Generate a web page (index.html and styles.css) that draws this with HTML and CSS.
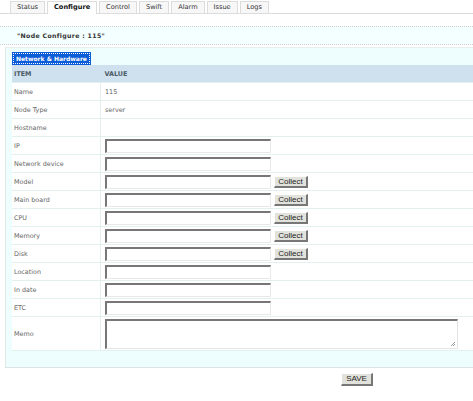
FILE: index.html
```html
<!DOCTYPE html>
<html>
<head>
<meta charset="utf-8">
<link rel="stylesheet" href="styles.css">
</head>
<body>
<div class="tabs">
  <span class="tab">Status</span>
  <span class="tab active">Configure</span>
  <span class="tab">Control</span>
  <span class="tab">Swift</span>
  <span class="tab">Alarm</span>
  <span class="tab">Issue</span>
  <span class="tab">Logs</span>
</div>
<div class="title-bar">"Node Configure : 115"</div>
<div class="panel">
  <div class="legend">Network &amp; Hardware</div>
  <table class="grid">
    <tr class="head"><td class="c1">ITEM</td><td class="c2">VALUE</td></tr>
    <tr><td class="c1">Name</td><td class="c2">115</td></tr>
    <tr><td class="c1">Node Type</td><td class="c2">server</td></tr>
    <tr><td class="c1">Hostname</td><td class="c2"></td></tr>
    <tr><td class="c1">IP</td><td class="c2"><span class="inp"></span></td></tr>
    <tr><td class="c1">Network device</td><td class="c2"><span class="inp"></span></td></tr>
    <tr><td class="c1">Model</td><td class="c2"><span class="inp"></span><span class="btn">Collect</span></td></tr>
    <tr><td class="c1">Main board</td><td class="c2"><span class="inp"></span><span class="btn">Collect</span></td></tr>
    <tr><td class="c1">CPU</td><td class="c2"><span class="inp"></span><span class="btn">Collect</span></td></tr>
    <tr><td class="c1">Memory</td><td class="c2"><span class="inp"></span><span class="btn">Collect</span></td></tr>
    <tr><td class="c1">Disk</td><td class="c2"><span class="inp"></span><span class="btn">Collect</span></td></tr>
    <tr><td class="c1">Location</td><td class="c2"><span class="inp"></span></td></tr>
    <tr><td class="c1">In date</td><td class="c2"><span class="inp"></span></td></tr>
    <tr><td class="c1">ETC</td><td class="c2"><span class="inp"></span></td></tr>
    <tr class="memo"><td class="c1">Memo</td><td class="c2"><span class="ta"><svg class="grip" width="6" height="6" viewBox="0 0 6 6"><path d="M5 1L1 5M5 3L3 5" stroke="#888" stroke-width="0.8"/></svg></span></td></tr>
  </table>
</div>
<div class="actions"><span class="save">SAVE</span></div>
</body>
</html>
```
FILE: styles.css
```css
html, body { margin: 0; padding: 0; background: #fff; }
body { width: 473px; height: 401px; overflow: hidden; font-family: "DejaVu Sans", Verdana, sans-serif; }

.tabs {
  display: flex;
  padding: 1px 0 0 10px;
  height: 12px;
  border-bottom: 1px solid #dcdcdc;
  align-items: flex-end;
}
.tab {
  box-sizing: border-box;
  height: 12px;
  margin-right: 2px;
  padding: 0 6px;
  font-size: 6.6px;
  line-height: 11px;
  color: #333;
  background: #f7f7f7;
  border: 1px solid #dcdcdc;
  border-bottom: none;
}
.tab.active {
  background: #fff;
  font-weight: bold;
  color: #111;
  height: 13px;
  margin-bottom: -1px;
}

.title-bar {
  margin-top: 12px;
  height: 17px;
  border-top: 1px dotted #d0d0d0;
  border-bottom: 1px dotted #d0d0d0;
  background: #f4ffff;
  padding-left: 17px;
  font-size: 6.2px;
  font-weight: bold;
  letter-spacing: 0.35px;
  line-height: 17px;
  color: #333;
}

.panel {
  margin: 2px 0 0 5px;
  background: #eefefe;
  border-left: 1px solid #e2e8e8;
  border-top: 1px solid #e6eeee;
  border-bottom: 1px solid #dde3e3;
  padding: 4px 0 16px 6px;
}
.legend {
  width: fit-content;
  background: #0b5cd8;
  color: #fff;
  font-weight: bold;
  font-size: 6px;
  line-height: 9px;
  padding: 0 2px;
  border: 1px dotted #fff;
  outline: 1px solid #0b5cd8;
  margin: 1px 0 1px 1px;
}

.grid {
  width: 100%;
  border-collapse: collapse;
  font-size: 6.4px;
  color: #666;
  background: #fff;
}
.grid td {
  height: 17px;
  padding: 0;
  border-bottom: 1px solid #e2f0ee;
  vertical-align: middle;
}
.grid .c1 { width: 86px; padding-left: 2px; border-right: 1px solid #e2f0ee; }
.grid .c2 { padding-left: 4px; }
.grid tr.head td {
  background: #cfe0ee;
  font-weight: bold;
  color: #4a5a66;
  height: 17px;
  border-right: none;
}
.grid tr.memo td { height: 33px; }

.inp {
  display: inline-block;
  box-sizing: border-box;
  width: 166px;
  height: 14px;
  vertical-align: middle;
  background: #fff;
  border: 1px solid #e8e8e8;
  border-top: 2px solid #777;
  border-left: 2px solid #777;
}
.btn {
  display: inline-block;
  box-sizing: border-box;
  margin-left: 3px;
  width: 34px;
  height: 12px;
  vertical-align: middle;
  background: #e2e2dc;
  border: 1px solid #fff;
  border-right: 2px solid #777;
  border-bottom: 2px solid #777;
  font-family: "Liberation Sans", Arial, sans-serif;
  font-size: 8px;
  line-height: 9px;
  text-align: center;
  color: #222;
}
.ta {
  display: block;
  position: relative;
  box-sizing: border-box;
  width: 353px;
  height: 30px;
  background: #fff;
  border: 1px solid #e4e4e4;
  border-top: 2px solid #777;
  border-left: 2px solid #777;
}
.grip { position: absolute; right: 1px; bottom: 1px; }

.actions {
  display: flex;
  padding: 5px 0 0 341px;
}
.save {
  box-sizing: border-box;
  width: 32px;
  height: 13px;
  background: #e2e2dc;
  border: 1px solid #fff;
  border-right: 2px solid #777;
  border-bottom: 2px solid #777;
  font-family: "Liberation Sans", Arial, sans-serif;
  font-size: 8px;
  line-height: 10px;
  text-align: center;
  color: #222;
}
```
